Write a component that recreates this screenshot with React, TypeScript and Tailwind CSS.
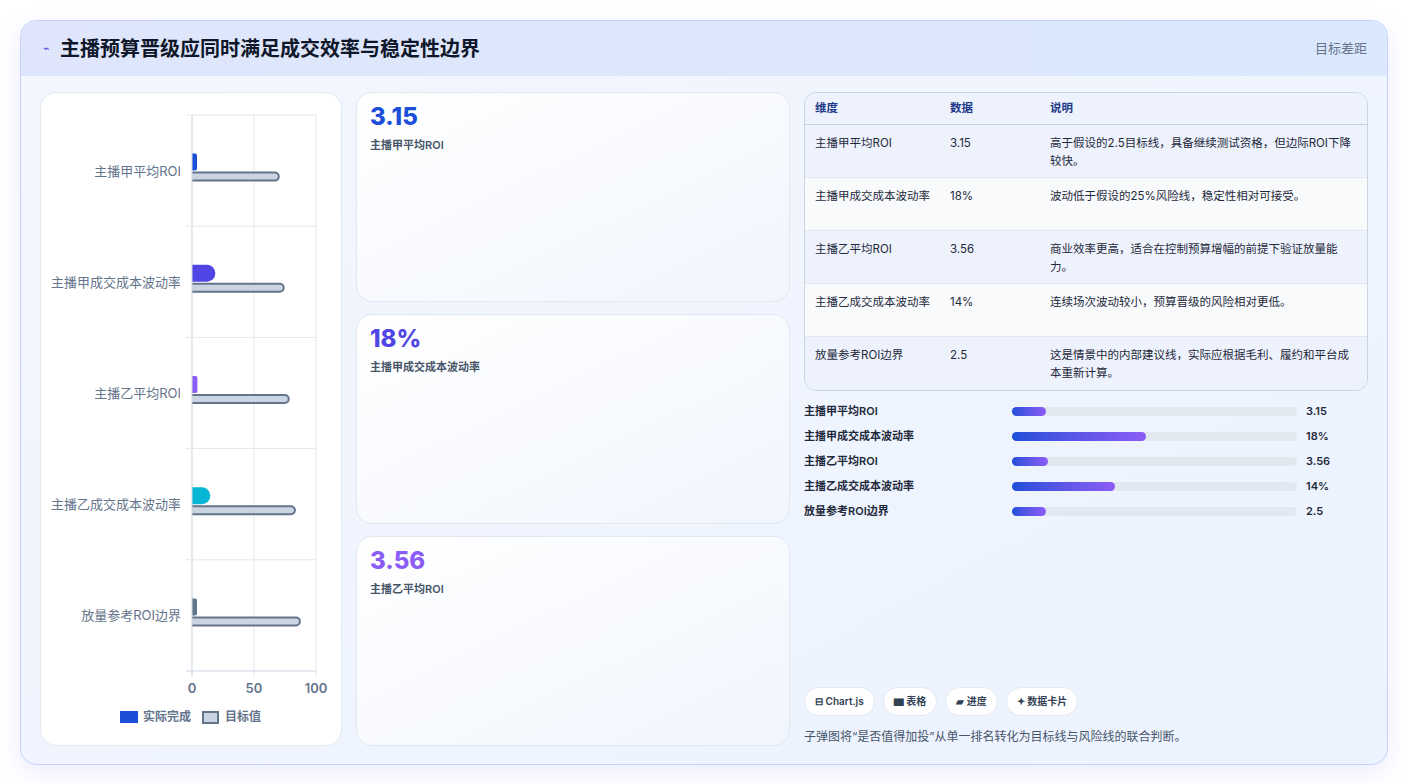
import React from "react";

const cats = [
  { name: "主播甲平均ROI", v: 3.15, t: 70, c: "#1d4ed8" },
  { name: "主播甲成交成本波动率", v: 18, t: 74, c: "#4f46e5" },
  { name: "主播乙平均ROI", v: 3.56, t: 78, c: "#8b5cf6" },
  { name: "主播乙成交成本波动率", v: 14, t: 83, c: "#06b6d4" },
  { name: "放量参考ROI边界", v: 2.5, t: 87, c: "#64748b" },
];

const rows = [
  ["主播甲平均ROI", "3.15", "高于假设的2.5目标线，具备继续测试资格，但边际ROI下降较快。"],
  ["主播甲成交成本波动率", "18%", "波动低于假设的25%风险线，稳定性相对可接受。"],
  ["主播乙平均ROI", "3.56", "商业效率更高，适合在控制预算增幅的前提下验证放量能力。"],
  ["主播乙成交成本波动率", "14%", "连续场次波动较小，预算晋级的风险相对更低。"],
  ["放量参考ROI边界", "2.5", "这是情景中的内部建议线，实际应根据毛利、履约和平台成本重新计算。"],
];

const prog = [
  ["主播甲平均ROI", "3.15", 12],
  ["主播甲成交成本波动率", "18%", 47],
  ["主播乙平均ROI", "3.56", 12.5],
  ["主播乙成交成本波动率", "14%", 36],
  ["放量参考ROI边界", "2.5", 12],
] as const;

function Chart() {
  const x0 = 151, w = 124, top = 22, band = 111.2;
  return (
    <svg width="300" height="652" viewBox="0 0 300 652">
      {[0, 50, 100].map((g, i) => (
        <line key={i} x1={x0 + (g / 100) * w} x2={x0 + (g / 100) * w} y1={top} y2={top + band * 5 + 6} stroke={i === 0 ? "#cbd5e1" : "#e5e7eb"} />
      ))}
      {[0, 1, 2, 3, 4, 5].map((i) => (
        <line key={i} x1={x0 - 6} x2={x0 + w} y1={top + band * i} y2={top + band * i} stroke={i === 5 ? "#cbd5e1" : "#e5e7eb"} />
      ))}
      {cats.map((c, i) => {
        const cy = top + band * i + band / 2;
        const vw = Math.max(5, (c.v / 100) * w + 1);
        const thick = c.v > 10;
        return (
          <g key={i}>
            <text x={x0 - 11} y={cy + 5} textAnchor="end" fontSize="13" fill="#64748b">{c.name}</text>
            <rect x={x0 - 8} y={cy + 2} width={(c.t / 100) * w + 8} height={8} rx={4} fill="#cbd5e1" stroke="#64748b" strokeWidth="2" />
            <rect x={x0 - 10} y={cy - 17} width={vw + 10} height={17} rx={thick ? 8.5 : 2} fill={c.c} />
            <rect x={x0 - 12} y={cy - 20} width={12} height={32} fill="white" />
            <line x1={x0} x2={x0} y1={cy - 20} y2={cy + 12} stroke="#cbd5e1" />
          </g>
        );
      })}
      {[0, 50, 100].map((g) => (
        <text key={g} x={x0 + (g / 100) * w} y={600} textAnchor="middle" fontSize="13" fontWeight="600" fill="#64748b">{g}</text>
      ))}
      <rect x={79} y={618} width={18} height={12} fill="#1d4ed8" />
      <text x={102} y={628} fontSize="12" fontWeight="600" fill="#64748b">实际完成</text>
      <rect x={162} y={619} width={15} height={11} fill="#cbd5e1" stroke="#64748b" strokeWidth="2" />
      <text x={184} y={628} fontSize="12" fontWeight="600" fill="#64748b">目标值</text>
    </svg>
  );
}

function Card({ value, label, color }: { value: string; label: string; color: string }) {
  return (
    <div className="flex-1 rounded-2xl border border-[#e2e8f0] bg-gradient-to-br from-white to-[#f1f5fd] px-[13px] pt-[10px]">
      <div className={`text-[24px] font-extrabold leading-[28px] ${color}`}>{value}</div>
      <div className="mt-[6px] text-[11px] font-semibold text-[#475569]">{label}</div>
    </div>
  );
}

export default function App() {
  return (
    <div className="h-[783px] w-[1408px] bg-white p-[20px] pb-[18px]" style={{ fontFamily: "Inter, 'Noto Sans CJK SC', sans-serif" }}>
      <div className="flex h-full flex-col overflow-hidden rounded-2xl border border-[#c7d2fe] bg-gradient-to-br from-[#f3f6fd] to-[#ecf3ff] shadow-[0_8px_24px_rgba(99,102,241,0.12)]">
        <div className="flex h-[56px] items-center justify-between bg-gradient-to-r from-[#dfe6fb] to-[#dbe8fd] pl-[22px] pr-[20px]">
          <div className="flex items-center gap-[10px]">
            <span className="text-[11px] text-[#4f46e5]">⌁</span>
            <span className="text-[20px] font-bold text-[#0f172a]">主播预算晋级应同时满足成交效率与稳定性边界</span>
          </div>
          <span className="text-[13px] text-[#64748b]">目标差距</span>
        </div>
        <div className="flex flex-1 gap-[14px] px-[19px] pb-[18px] pt-[16px]">
          <div className="w-[302px] overflow-hidden rounded-2xl border border-[#e2e8f0] bg-white">
            <Chart />
          </div>
          <div className="flex w-[434px] flex-col gap-[12px]">
            <Card value="3.15" label="主播甲平均ROI" color="text-[#1d4ed8]" />
            <Card value="18%" label="主播甲成交成本波动率" color="text-[#4f46e5]" />
            <Card value="3.56" label="主播乙平均ROI" color="text-[#8b5cf6]" />
          </div>
          <div className="flex flex-1 flex-col">
            <div className="overflow-hidden rounded-xl border border-[#cbd5e1] text-[11.5px]">
              <div className="grid grid-cols-[135px_100px_1fr] border-b border-[#cbd5e1] bg-[#eef2fd] px-[10px] py-[7px] font-semibold text-[#1e3a8a]">
                <span>维度</span><span>数据</span><span>说明</span>
              </div>
              {rows.map((r, i) => (
                <div key={i} className={`grid h-[53px] grid-cols-[135px_100px_1fr] px-[10px] pr-[14px] pt-[9px] leading-[18px] text-[#1e293b] ${i < 4 ? "border-b border-[#e2e8f0]" : ""} ${i % 2 === 0 ? "bg-[#eef2fd]" : "bg-[#f8fafc]"}`}>
                  <span className="pr-[18px]">{r[0]}</span><span>{r[1]}</span><span>{r[2]}</span>
                </div>
              ))}
            </div>
            <div className="mt-[11px] flex flex-col gap-[7px]">
              {prog.map((p, i) => (
                <div key={i} className="flex h-[18px] items-center text-[11px] font-semibold text-[#1e293b]">
                  <span className="w-[208px]">{p[0]}</span>
                  <div className="h-[9px] w-[285px] rounded-full bg-[#e2e8f0]">
                    <div className="h-full rounded-full bg-gradient-to-r from-[#1d4ed8] to-[#8b5cf6]" style={{ width: `${p[2]}%` }} />
                  </div>
                  <span className="ml-[9px]">{p[1]}</span>
                </div>
              ))}
            </div>
            <div className="mt-auto flex gap-[8px] text-[10px] font-semibold text-[#334155]">
              {["⊟ Chart.js", "▆ 表格", "▰ 进度", "✦ 数据卡片"].map((t) => (
                <span key={t} className="rounded-full border border-[#e2e8f0] bg-white px-[10px] py-[6px]">{t}</span>
              ))}
            </div>
            <div className="mt-[12px] text-[12px] text-[#475569]">子弹图将“是否值得加投”从单一排名转化为目标线与风险线的联合判断。</div>
          </div>
        </div>
      </div>
    </div>
  );
}
